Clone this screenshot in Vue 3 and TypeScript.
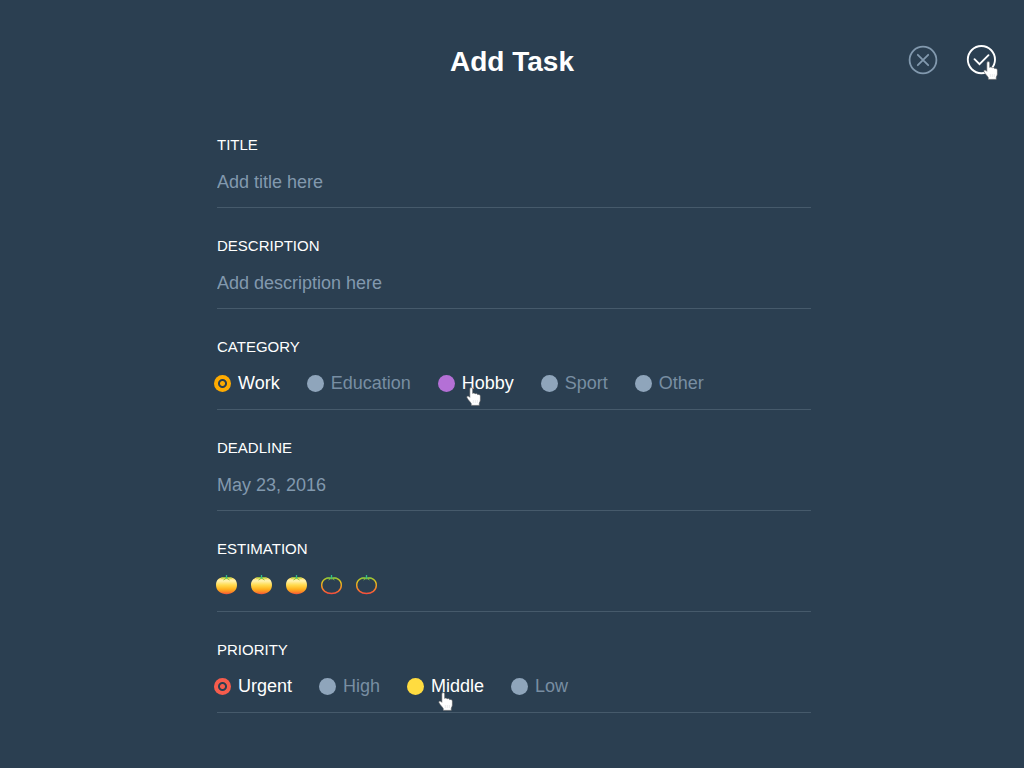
<script setup lang="ts">
import { ref } from 'vue'

interface Option {
  name: string
  color: string
  lit?: boolean
  cursor?: string
}

const categories: Option[] = [
  { name: 'Work', color: '#ffab00' },
  { name: 'Education', color: '#8fa5bb' },
  { name: 'Hobby', color: '#b470d6', lit: true, cursor: 'on-hobby' },
  { name: 'Sport', color: '#8fa5bb' },
  { name: 'Other', color: '#8fa5bb' },
]
const priorities: Option[] = [
  { name: 'Urgent', color: '#f75c4c' },
  { name: 'High', color: '#8fa5bb' },
  { name: 'Middle', color: '#ffdc40', lit: true, cursor: 'on-middle' },
  { name: 'Low', color: '#8fa5bb' },
]

const title = ref('')
const description = ref('')
const deadline = ref('May 23, 2016')
const category = ref('Work')
const priority = ref('Urgent')
const estimation = ref(3)
</script>

<template>
  <form class="page" @submit.prevent>
    <svg class="defs" aria-hidden="true">
      <defs>
        <linearGradient id="tomato-fill" x1="0" y1="0" x2="0" y2="1">
          <stop offset="0" stop-color="#ffd84a" />
          <stop offset="0.2" stop-color="#fff3b4" />
          <stop offset="0.45" stop-color="#ffdb50" />
          <stop offset="0.7" stop-color="#ffb31e" />
          <stop offset="0.88" stop-color="#fb8228" />
          <stop offset="1" stop-color="#f4503a" />
        </linearGradient>
        <linearGradient id="tomato-line" x1="0" y1="0" x2="0" y2="1">
          <stop offset="0" stop-color="#a9cc2c" />
          <stop offset="0.3" stop-color="#f0c01c" />
          <stop offset="0.65" stop-color="#f98a25" />
          <stop offset="1" stop-color="#f7503c" />
        </linearGradient>
        <symbol id="hand" viewBox="0 0 15 19">
          <path
            d="M3.800 1.800C3.800.2 6.700.2 6.700 1.800V6.400c.4-.6 2.300-.5 2.500.5.5-.7 2.300-.4 2.400.7.800-.5 2.800-.2 2.800 1.400v4c0 1.500-.9 2.200-1.100 3.300V18.400H5.200v-1.900C4.300 14.700 2.300 13.200 1 10.900.1 9.300 2 8.100 3.100 9.500L3.800 10.300Z"
            fill="#fff" stroke="#4d5154" stroke-width="0.6" stroke-linejoin="round"
          />
          <path d="M7.300 13v3M9.300 13v3M11.300 13v3" stroke="#d5d7d8" stroke-width="0.5" />
        </symbol>
      </defs>
    </svg>

    <header class="top">
      <h1>Add Task</h1>
      <div class="actions">
        <button type="button" class="icon-btn cancel" aria-label="Cancel">
          <svg viewBox="0 0 30 30" fill="none" stroke="currentColor" stroke-width="1.8">
            <circle cx="15" cy="15" r="13.400" />
            <path d="M9.800 9.800l10.400 10.400M20.200 9.800l-10.400 10.400" stroke-linecap="round" />
          </svg>
        </button>
        <button type="submit" class="icon-btn save" aria-label="Save">
          <svg viewBox="0 0 30 30" fill="none" stroke="currentColor" stroke-width="1.9">
            <circle cx="15.400" cy="14.600" r="13.600" />
            <path d="M8.500 14.200l5 5 9-9" stroke-linecap="round" />
          </svg>
          <svg class="cursor on-save" aria-hidden="true"><use href="#hand" /></svg>
        </button>
      </div>
    </header>

    <main class="fields">
      <div class="field">
        <label class="caption" for="title">TITLE</label>
        <input id="title" v-model="title" class="text" type="text" placeholder="Add title here" />
      </div>
      <div class="field">
        <label class="caption" for="description">DESCRIPTION</label>
        <input id="description" v-model="description" class="text" type="text" placeholder="Add description here" />
      </div>
      <div class="field" role="radiogroup" aria-labelledby="category-caption">
        <span id="category-caption" class="caption">CATEGORY</span>
        <div class="options">
          <label v-for="o in categories" :key="o.name" class="option" :class="{ lit: o.lit || category === o.name }">
            <input v-model="category" type="radio" name="category" :value="o.name" :style="{ '--dot': o.color }" />
            <span>{{ o.name }}</span>
            <svg v-if="o.cursor" class="cursor" :class="o.cursor" aria-hidden="true"><use href="#hand" /></svg>
          </label>
        </div>
      </div>
      <div class="field">
        <label class="caption" for="deadline">DEADLINE</label>
        <input id="deadline" v-model="deadline" class="text" type="text" />
      </div>
      <div class="field" role="group" aria-labelledby="estimation-caption">
        <span id="estimation-caption" class="caption">ESTIMATION</span>
        <div class="tomatoes">
          <button v-for="n in 5" :key="n" type="button" class="tomato" :aria-label="`Estimate ${n}`" @click="estimation = n">
            <svg viewBox="0 0 21 20">
              <path
                v-if="n <= estimation"
                d="M10.500 2.800C15 1.400 21 3.300 21 10 21 16 16 19.200 10.500 19.200S0 16 0 10C0 3.300 6 1.400 10.500 2.800Z"
                fill="url(#tomato-fill)"
              />
              <path
                v-else
                d="M10.500 3.500C15 2.200 20.300 4 20.300 10.200 20.300 15.500 15.700 18.500 10.500 18.500S.7 15.500.7 10.200C.7 4 6 2.200 10.500 3.500Z"
                fill="none" stroke="url(#tomato-line)" stroke-width="1.400"
              />
              <path
                d="M5.500 3.200c2-.8 3.500-.5 5-.2 1.500-.3 3-.6 5 .2M10.500 3L7.500 5M10.500 3l3 2"
                fill="none" :stroke="n <= estimation ? '#8cc436' : '#6fb84a'" stroke-width="1"
              />
              <path d="M10.500 0v3.500" stroke="#2fc08a" stroke-width="1.300" />
            </svg>
          </button>
        </div>
      </div>
      <div class="field" role="radiogroup" aria-labelledby="priority-caption">
        <span id="priority-caption" class="caption">PRIORITY</span>
        <div class="options">
          <label v-for="o in priorities" :key="o.name" class="option" :class="{ lit: o.lit || priority === o.name }">
            <input v-model="priority" type="radio" name="priority" :value="o.name" :style="{ '--dot': o.color }" />
            <span>{{ o.name }}</span>
            <svg v-if="o.cursor" class="cursor" :class="o.cursor" aria-hidden="true"><use href="#hand" /></svg>
          </label>
        </div>
      </div>
    </main>
  </form>
</template>

<style>
body {
  margin: 0;
  background: #2b3f51;
}
</style>

<style scoped>
.page {
  box-sizing: border-box;
  min-height: 100vh;
  padding: 40px 0;
  background: #2b3f51;
  color: #fff;
  font-family: "Liberation Sans", Arial, sans-serif;
  font-size: 18px;
}
.defs {
  position: absolute;
  width: 0;
  height: 0;
}
.top {
  display: grid;
  grid-template-columns: 1fr auto 1fr;
  align-items: center;
  height: 40px;
  padding: 0 28px;
}
h1 {
  grid-column: 2;
  margin: 0;
  padding-top: 4px;
  font-size: 28px;
  line-height: 36px;
}
.actions {
  display: flex;
  justify-content: flex-end;
  gap: 28px;
}
.icon-btn {
  position: relative;
  width: 30px;
  height: 30px;
  padding: 0;
  border: 0;
  background: none;
  color: #fff;
  cursor: pointer;
}
.icon-btn > svg:first-child {
  display: block;
  width: 30px;
  height: 30px;
}
.cancel {
  color: #8299ae;
}
.cursor {
  position: absolute;
  width: 15px;
  height: 19px;
  pointer-events: none;
}
.on-save {
  left: 17px;
  top: 16px;
}
.on-hobby {
  left: 28px;
  top: 16px;
}
.on-middle {
  left: 31px;
  top: 18px;
}
.fields {
  margin: 27px 213px 0 217px;
}
.field {
  display: flex;
  flex-direction: column;
  box-sizing: border-box;
  height: 101px;
  padding-top: 28px;
  border-bottom: 1px solid #465a6b;
}
.caption {
  font-size: 15px;
  line-height: 20px;
}
.text {
  width: 100%;
  height: 24px;
  margin: 15px 0 0;
  padding: 0;
  border: 0;
  outline: 0;
  background: none;
  color: #8299ae;
  font: inherit;
  line-height: 24px;
}
.text::placeholder {
  color: #8299ae;
  opacity: 1;
}
.options {
  display: flex;
  flex-wrap: wrap;
  gap: 27px;
  margin: 14px 0 0 -3px;
}
.option {
  position: relative;
  display: flex;
  align-items: center;
  gap: 7px;
  color: #788ea2;
  line-height: 24px;
  cursor: pointer;
}
.option.lit {
  color: #fff;
}
.option input {
  appearance: none;
  width: 17px;
  height: 17px;
  margin: 0;
  border-radius: 50%;
  background: var(--dot);
}
.option input:checked {
  background: radial-gradient(circle, var(--dot) 2px, #2b3f51 3px, #2b3f51 4px, var(--dot) 5px);
}
.tomatoes {
  display: flex;
  gap: 14px;
  margin: 16px 0 0 -1px;
}
.tomato {
  width: 21px;
  height: 20px;
  padding: 0;
  border: 0;
  background: none;
  cursor: pointer;
}
.tomato svg {
  display: block;
  width: 21px;
  height: 20px;
}
@media (max-width: 800px) {
  .fields {
    margin-left: 32px;
    margin-right: 32px;
  }
}
</style>
